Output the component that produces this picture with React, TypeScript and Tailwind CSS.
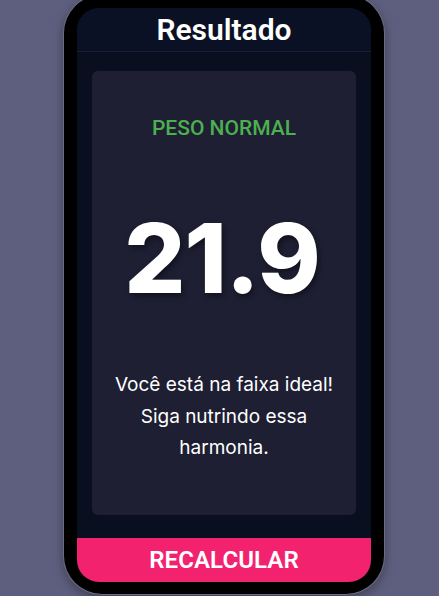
import React from "react";

export default function App() {
  return (
    <div className="w-full h-[596px] bg-[#5e5e7e] overflow-hidden" style={{ fontFamily: "Roboto, sans-serif" }}>
      <div className="mt-[-5px] ml-[64px] w-[320px] h-[599px] bg-black rounded-[38px] px-[13px] pt-[13px] pb-[12px] shadow-[0_0_0_1px_#6c6c80,0_4px_12px_rgba(0,0,0,0.35)]">
        <div className="h-full rounded-[22px] bg-[#0a0f20] flex flex-col overflow-hidden">
          <div className="h-[44px] shrink-0 bg-[#0b1124] border-b border-[#191e31] flex items-center justify-center">
            <span className="text-white text-[30px] font-semibold leading-none tracking-[0px] mt-[1px]">Resultado</span>
          </div>
          <div className="flex-1 px-[15px] pt-[19px] pb-[23px] flex">
            <div className="flex-1 bg-[#1e1f33] rounded-[6px] flex flex-col items-center">
              <div className="mt-[43px] text-[#4caf50] text-[21px] font-medium leading-[28px]">PESO NORMAL</div>
              <div
                className="mt-[68px] text-white text-[96px] font-extrabold leading-none tracking-[-1px] ml-[-4px]"
                style={{ fontFamily: "Inter, sans-serif", textShadow: "2px 3px 6px rgba(0,0,0,0.45)" }}
              >
                21.9
              </div>
              <div
                className="mt-[63px] text-white text-[19px] leading-[31.5px] text-center px-[10px]"
                style={{ fontFamily: "Inter, sans-serif" }}
              >
                Você está na faixa ideal!
                <br />
                Siga nutrindo essa
                <br />
                harmonia.
              </div>
            </div>
          </div>
          <button className="h-[44px] shrink-0 bg-[#f3226f] text-white text-[24px] font-semibold tracking-[0.1px]">
            RECALCULAR
          </button>
        </div>
      </div>
    </div>
  );
}
